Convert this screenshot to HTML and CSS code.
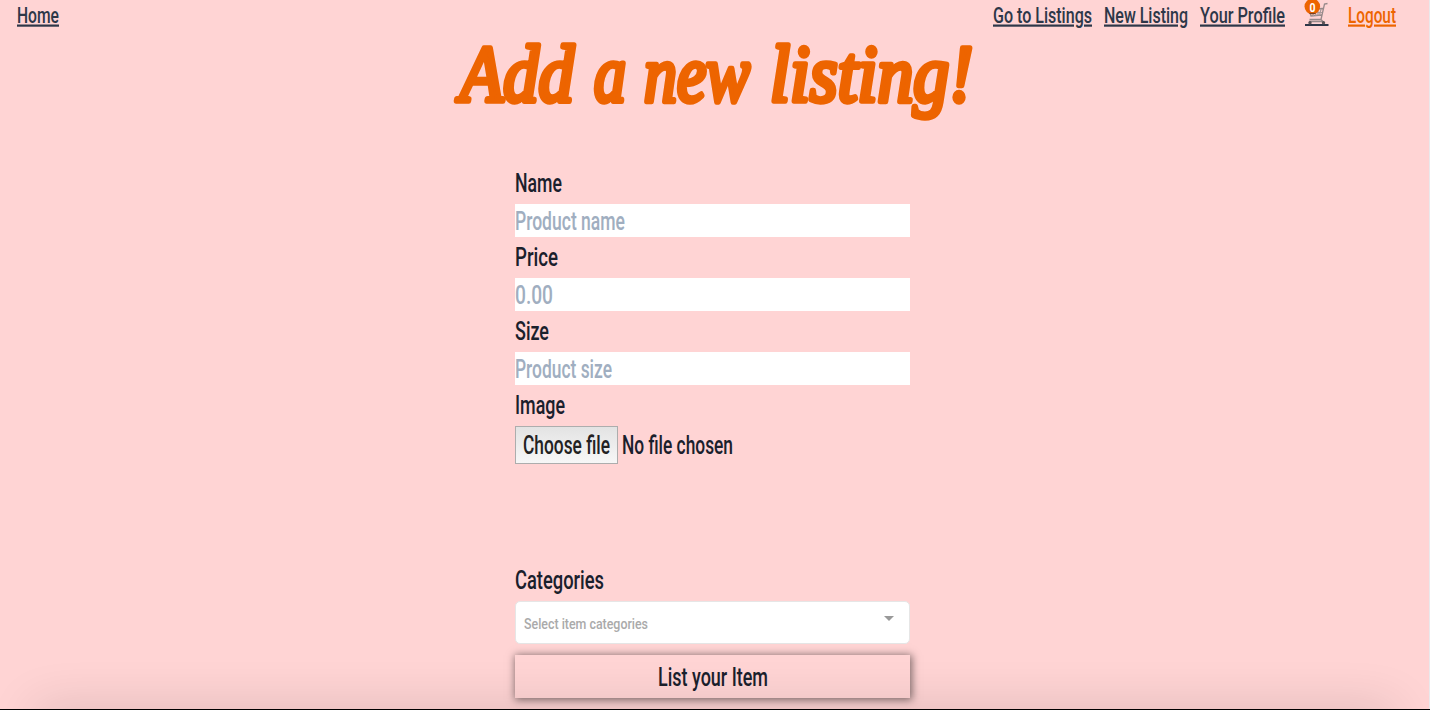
FILE: index.html
```html
<!DOCTYPE html>
<html lang="en">
<head>
<meta charset="utf-8">
<title>Add a new listing</title>
<link rel="stylesheet" href="styles.css">
</head>
<body>
<div class="page">
  <nav class="nav">
    <a class="link"><svg class="t" width="42" height="34"><text x="0" y="22.5" textLength="42" lengthAdjust="spacingAndGlyphs">Home</text></svg></a>
    <div class="nav-right">
      <a class="link"><svg class="t" width="99" height="34"><text x="0" y="22.5" textLength="99" lengthAdjust="spacingAndGlyphs">Go to Listings</text></svg></a>
      <a class="link"><svg class="t" width="84" height="34"><text x="0" y="22.5" textLength="84" lengthAdjust="spacingAndGlyphs">New Listing</text></svg></a>
      <a class="link"><svg class="t" width="85" height="34"><text x="0" y="22.5" textLength="85" lengthAdjust="spacingAndGlyphs">Your Profile</text></svg></a>
      <a class="cart"><svg class="t" width="23" height="34" viewBox="0 0 23 34">
        <path d="M22.500 3.500L19.500 4L16 19.500H4.500M18 8.500L4 9L6 16L16.500 15M16 19.500L18 21.500H4" fill="none" stroke="#96898a" stroke-width="1.300"/>
        <path d="M7 9L8.500 16M10 9L11 16M13 9V15.500M16 9L14.500 15.500M4.500 12.500H17" fill="none" stroke="#a99b9c" stroke-width="1.200"/>
        <rect x="0" y="24" width="23.500" height="2" fill="#2d3748"/>
        <circle cx="5" cy="22.700" r="1.700" fill="#5c5557"/><circle cx="18.500" cy="22.700" r="1.700" fill="#5c5557"/>
        <circle cx="7.300" cy="6.500" r="7.800" fill="#ed6400"/>
        <path d="M4.500 13.500H10.500" stroke="#7a3f1c" stroke-width="1.200"/>
        <text class="count" x="4.500" y="11.500" textLength="6" lengthAdjust="spacingAndGlyphs">0</text>
      </svg></a>
      <a class="link logout"><svg class="t" width="48" height="34"><text x="0" y="22.5" textLength="48" lengthAdjust="spacingAndGlyphs">Logout</text></svg></a>
    </div>
  </nav>

  <h1 class="title"><svg class="t" width="524" height="129"><text y="67"><tspan x="9" textLength="114" lengthAdjust="spacingAndGlyphs">Add</tspan> <tspan x="143" textLength="32" lengthAdjust="spacingAndGlyphs">a</tspan> <tspan x="193" textLength="106" lengthAdjust="spacingAndGlyphs">new</tspan> <tspan x="319" textLength="203" lengthAdjust="spacingAndGlyphs">listing!</tspan></text></svg></h1>

  <form class="form">
    <label class="label"><svg class="t" width="395" height="41"><text x="0" y="28.5" textLength="47" lengthAdjust="spacingAndGlyphs">Name</text></svg></label>
    <div class="input"><svg class="t" width="395" height="33"><text x="0" y="25.5" textLength="110" lengthAdjust="spacingAndGlyphs">Product name</text></svg></div>
    <label class="label"><svg class="t" width="395" height="41"><text x="0" y="28.5" textLength="43" lengthAdjust="spacingAndGlyphs">Price</text></svg></label>
    <div class="input"><svg class="t" width="395" height="33"><text x="0" y="25.5" textLength="38" lengthAdjust="spacingAndGlyphs">0.00</text></svg></div>
    <label class="label"><svg class="t" width="395" height="41"><text x="0" y="28.5" textLength="34" lengthAdjust="spacingAndGlyphs">Size</text></svg></label>
    <div class="input"><svg class="t" width="395" height="33"><text x="0" y="25.5" textLength="97" lengthAdjust="spacingAndGlyphs">Product size</text></svg></div>
    <label class="label"><svg class="t" width="395" height="41"><text x="0" y="28.5" textLength="50" lengthAdjust="spacingAndGlyphs">Image</text></svg></label>
    <div class="file">
      <span class="choose"><svg class="t" width="87" height="36"><text x="0" y="26.5" textLength="87" lengthAdjust="spacingAndGlyphs">Choose file</text></svg></span>
      <svg class="t" width="112" height="38"><text x="0" y="27.5" textLength="111" lengthAdjust="spacingAndGlyphs">No file chosen</text></svg>
    </div>
    <label class="label"><svg class="t" width="395" height="41"><text x="0" y="28.5" textLength="89" lengthAdjust="spacingAndGlyphs">Categories</text></svg></label>
    <div class="select">
      <svg class="t" width="125" height="40"><text x="0" y="26.5" textLength="124" lengthAdjust="spacingAndGlyphs">Select item categories</text></svg>
      <span class="caret"></span>
    </div>
    <div class="submit"><svg class="t" width="110" height="43"><text x="0" y="30.5" textLength="110" lengthAdjust="spacingAndGlyphs">List your Item</text></svg></div>
  </form>
  <div class="shade"></div>
  <div class="edge"></div>
</div>
</body>
</html>
```
FILE: styles.css
```css
* { box-sizing: border-box; }
body { margin: 0; background: #ffd4d4; font-family: Roboto, sans-serif; }
.page { position: relative; width: 1430px; height: 710px; overflow: hidden; border-bottom: 1px solid #000; }
.t { display: block; overflow: visible; }
.t text { font-size: 25px; font-weight: 500; fill: #1a202c; }
.nav { display: flex; justify-content: space-between; height: 34px; padding: 0 34px 0 17px; }
.nav-right { display: flex; gap: 12px; }
.link .t text { font-size: 22px; fill: #2d3748; text-decoration: underline; text-decoration-thickness: 2px; text-underline-offset: 1.5px; }
.cart { margin: 0 8px; }
.cart .t .count { font-size: 13px; font-weight: 700; fill: #fff; }
.logout .t text { fill: #ed6400; }
.title { display: flex; justify-content: center; margin: 0; height: 129px; padding-right: 4px; }
.title .t text { font-family: "Liberation Serif", serif; font-style: italic; font-weight: 400; font-size: 81px; fill: #ed6400; stroke: #ed6400; stroke-width: 5.5px; stroke-linejoin: round; stroke-linecap: round; }
.form { width: 395px; margin-left: 515px; }
.label { display: block; height: 41px; }
.input { height: 33px; background: #fff; }
.input .t text { fill: #a0aec0; }
.file { display: flex; gap: 4px; height: 38px; margin-bottom: 96px; }
.choose { width: 103px; height: 38px; padding: 0 7px; border: 1px solid #adadad; background: linear-gradient(#e3e3e3, #f7f7f7); }
.choose .t text { fill: #222; }
.select { display: flex; justify-content: space-between; height: 43px; padding: 0 15px 0 8px; border: 1px solid #e6e6e6; border-radius: 5px; background: #fff; }
.select .t text { font-size: 15.5px; fill: #aaa; }
.caret { width: 10px; height: 5px; margin-top: 14px; background: #999; clip-path: polygon(0 0, 100% 0, 50% 100%); }
.submit { display: flex; justify-content: center; height: 43px; margin-top: 11px; background: #ffd4d4; box-shadow: 1px 1px 8px 1px rgba(0, 0, 0, .5); }
.shade { position: absolute; left: 35px; right: 35px; bottom: -30px; height: 30px; box-shadow: 0 0 50px rgba(0, 0, 0, .16); }
.edge { position: absolute; top: 0; right: 0; bottom: 0; width: 1px; background: #e9e9ec; }
```
